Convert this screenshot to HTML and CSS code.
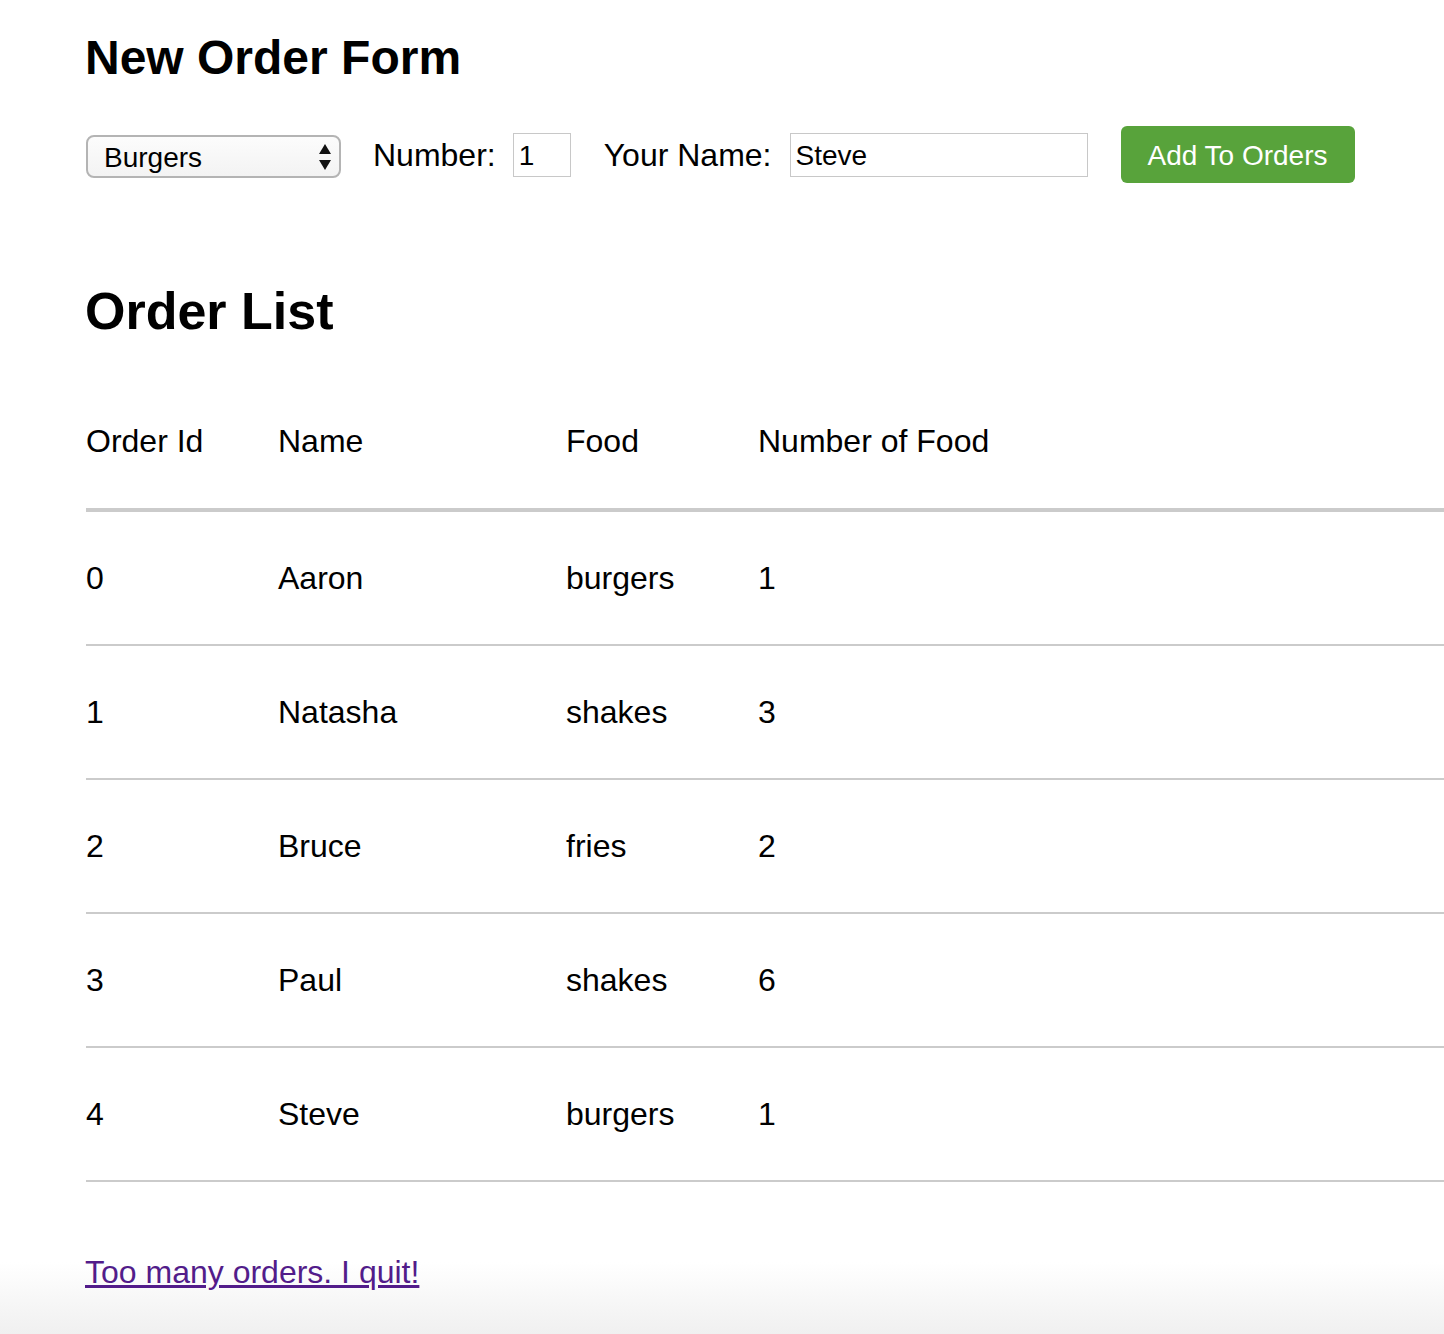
FILE: index.html
```html
<!DOCTYPE html>
<html lang="en">
<head>
<meta charset="utf-8">
<title>Orders</title>
<link rel="stylesheet" href="styles.css">
</head>
<body>
<main class="page">
  <h1 class="title">New Order Form</h1>
  <form class="order-form">
    <div class="select-wrap">
      <select class="food-select">
        <option>Burgers</option>
        <option>Fries</option>
        <option>Shakes</option>
      </select>
      <svg class="select-arrows" width="14" height="28" viewBox="0 0 14 28" aria-hidden="true">
        <path d="M7 1 L13 11 L1 11 Z" fill="#111"/>
        <path d="M1 17 L13 17 L7 27 Z" fill="#111"/>
      </svg>
    </div>
    <label class="field-label num-label" for="num">Number:</label>
    <input class="text-input num-input" id="num" type="text" value="1">
    <label class="field-label name-label" for="name">Your Name:</label>
    <input class="text-input name-input" id="name" type="text" value="Steve">
    <button class="add-btn" type="button">Add To Orders</button>
  </form>

  <h2 class="subtitle">Order List</h2>
  <table class="orders">
    <thead>
      <tr><th class="c1">Order Id</th><th class="c2">Name</th><th class="c3">Food</th><th class="c4">Number of Food</th></tr>
    </thead>
    <tbody>
      <tr><td>0</td><td>Aaron</td><td>burgers</td><td>1</td></tr>
      <tr><td>1</td><td>Natasha</td><td>shakes</td><td>3</td></tr>
      <tr><td>2</td><td>Bruce</td><td>fries</td><td>2</td></tr>
      <tr><td>3</td><td>Paul</td><td>shakes</td><td>6</td></tr>
      <tr><td>4</td><td>Steve</td><td>burgers</td><td>1</td></tr>
    </tbody>
  </table>

  <a class="quit-link" href="#">Too many orders. I quit!</a>
</main>
</body>
</html>
```
FILE: styles.css
```css
html {
  background: #fff;
}
body {
  margin: 0;
  min-height: 1334px;
  background: linear-gradient(to bottom, #ffffff 0, #ffffff 1262px, #f0f0f0 1334px);
  font-family: "Liberation Sans", Arial, Helvetica, sans-serif;
  color: #000;
}
.page {
  padding: 30px 0 0 85px;
}
.title {
  margin: 0;
  font-size: 48px;
  line-height: 56px;
  font-weight: bold;
}
.order-form {
  display: flex;
  align-items: center;
  margin-top: 40px;
  height: 57px;
}
.select-wrap {
  position: relative;
  width: 255px;
  height: 43px;
  margin-left: 1px;
  margin-top: 3px;
}
.food-select {
  appearance: none;
  -webkit-appearance: none;
  width: 100%;
  height: 100%;
  box-sizing: border-box;
  border: 2px solid #b4b4b4;
  border-radius: 8px;
  background: linear-gradient(#fcfcfc, #f3f3f3);
  font-family: "Liberation Sans", Arial, sans-serif;
  font-size: 28px;
  color: #000;
  padding: 2px 0 0 16px;
  margin: 0;
}
.select-arrows {
  position: absolute;
  right: 9px;
  top: 8px;
  pointer-events: none;
}
.field-label {
  font-size: 32px;
  margin-right: 17px;
  line-height: 37px;
  padding-top: 2px;
}
.num-label {
  margin-left: 32px;
}
.name-label {
  margin-left: 33px;
  margin-right: 18px;
}
.text-input {
  box-sizing: border-box;
  height: 44px;
  border: 1px solid #c8c8c8;
  border-radius: 0;
  padding: 2px 5px 0;
  font-family: "Liberation Sans", Arial, sans-serif;
  font-size: 28px;
  color: #000;
  background: #fff;
  margin: 0;
}
.num-input {
  width: 58px;
}
.name-input {
  width: 298px;
}
.add-btn {
  margin-left: 33px;
  height: 57px;
  width: 234px;
  border: none;
  border-radius: 6px;
  background: #58a33b;
  color: #fff;
  font-family: "Liberation Sans", Arial, sans-serif;
  font-size: 28px;
  padding: 2px 0 0;
}
.subtitle {
  margin: 98px 0 0;
  font-size: 52px;
  line-height: 60px;
  font-weight: bold;
}
.orders {
  margin-top: 33px;
  margin-left: 1px;
  width: calc(100% - 1px);
  border-collapse: collapse;
  font-size: 32px;
}
.orders th,
.orders td {
  text-align: left;
  font-weight: normal;
  padding: 48px 0;
  line-height: 36px;
}
.orders th {
  padding: 49px 0;
  border-bottom: 4px solid #cbcbcb;
}
.orders td {
  border-bottom: 2px solid #cbcbcb;
}
.c1 { width: 192px; }
.c2 { width: 288px; }
.c3 { width: 192px; }
.quit-link {
  display: inline-block;
  margin-top: 72px;
  font-size: 32px;
  line-height: 37px;
  color: #521c8a;
  text-decoration: underline;
}
```
